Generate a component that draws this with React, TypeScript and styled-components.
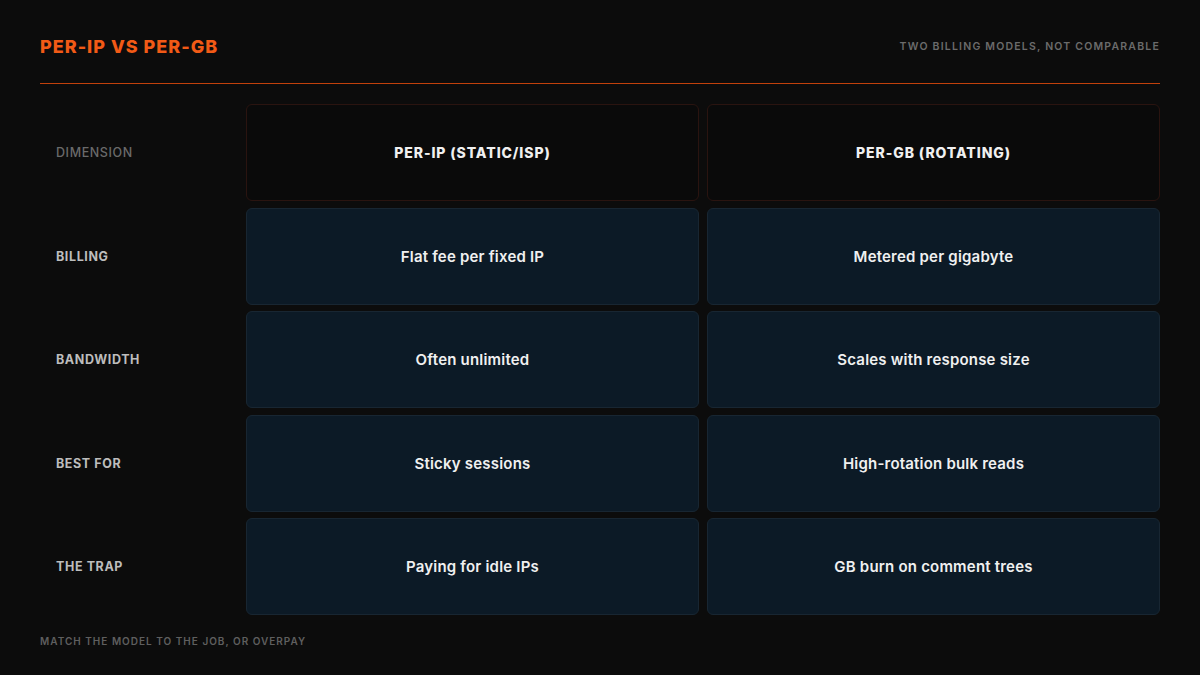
import React from "react";
import styled, {createGlobalStyle} from "styled-components";

const Global = createGlobalStyle`
  html, body { margin: 0; background: #0c0c0c; }
  body { font-family: Inter, "Open Sans", sans-serif; }
`;

const Page = styled.div`
  width: 1200px;
  height: 675px;
  box-sizing: border-box;
  padding: 34px 40px 0;
  display: flex;
  flex-direction: column;
`;

const Header = styled.div`
  display: flex;
  justify-content: space-between;
  align-items: center;
  height: 24px;
  padding-bottom: 25px;
  border-bottom: 1px solid #c2410c;
`;

const Title = styled.div`
  color: #f25a16;
  font-size: 18px;
  font-weight: 800;
  letter-spacing: 1px;
`;

const Sub = styled.div`
  color: #6b6b6b;
  font-size: 10.5px;
  font-weight: 600;
  letter-spacing: 1.2px;
`;

const Table = styled.div`
  margin-top: 20px;
  display: grid;
  grid-template-columns: 198px 1fr 1fr;
  grid-auto-rows: 97px;
  gap: 6.5px 8px;
`;

const Label = styled.div<{ $muted?: boolean }>`
  display: flex;
  align-items: center;
  padding-left: 16px;
  font-size: 12.5px;
  letter-spacing: 0.6px;
  color: ${p => (p.$muted ? "#6a6a6a" : "#bdbdbd")};
  font-weight: ${p => (p.$muted ? 500 : 700)};
`;

const Cell = styled.div<{ $head?: boolean }>`
  display: flex;
  align-items: center;
  justify-content: center;
  border-radius: 6px;
  border: 1px solid ${p => (p.$head ? "#2a1410" : "#182632")};
  background: ${p => (p.$head ? "#0a0a0a" : "#0c1a26")};
  color: #f0f0f0;
  font-size: ${p => (p.$head ? "14px" : "15px")};
  font-weight: ${p => (p.$head ? 800 : 600)};
  letter-spacing: ${p => (p.$head ? "0.9px" : "0.2px")};
`;

const Footer = styled.div`
  margin-top: 20px;
  color: #5f5f5f;
  font-size: 10px;
  font-weight: 600;
  letter-spacing: 1px;
`;

const rows = [
  ["BILLING", "Flat fee per fixed IP", "Metered per gigabyte"],
  ["BANDWIDTH", "Often unlimited", "Scales with response size"],
  ["BEST FOR", "Sticky sessions", "High-rotation bulk reads"],
  ["THE TRAP", "Paying for idle IPs", "GB burn on comment trees"],
];

export default function App() {
  return (
    <Page>
      <Global/>
      <Header>
        <Title>PER-IP VS PER-GB</Title>
        <Sub>TWO BILLING MODELS, NOT COMPARABLE</Sub>
      </Header>
      <Table>
        <Label $muted>DIMENSION</Label>
        <Cell $head>PER-IP (STATIC/ISP)</Cell>
        <Cell $head>PER-GB (ROTATING)</Cell>
        {rows.map(r => (
          <React.Fragment key={r[0]}>
            <Label>{r[0]}</Label>
            <Cell>{r[1]}</Cell>
            <Cell>{r[2]}</Cell>
          </React.Fragment>
        ))}
      </Table>
      <Footer>MATCH THE MODEL TO THE JOB, OR OVERPAY</Footer>
    </Page>
  );
}
